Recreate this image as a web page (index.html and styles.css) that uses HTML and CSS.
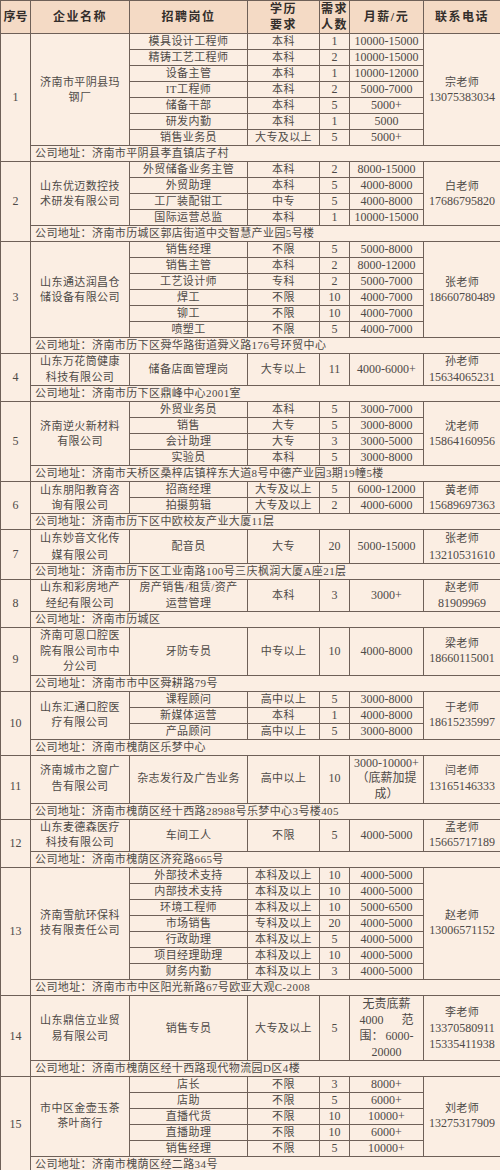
FILE: index.html
```html
<!DOCTYPE html>
<html lang="zh-CN">
<head>
<meta charset="utf-8">
<title>招聘信息</title>
<link rel="stylesheet" href="styles.css">
</head>
<body>
<table class="jobs">
<colgroup>
<col class="c-no"><col class="c-co"><col class="c-pos"><col class="c-edu"><col class="c-num"><col class="c-pay"><col class="c-tel">
</colgroup>
<thead>
<tr><th class="h-no">序号</th><th>企业名称</th><th>招聘岗位</th><th>学历<br>要求</th><th>需求<br>人数</th><th>月薪/元</th><th>联系电话</th></tr>
</thead>
<tbody>
<tr><td rowspan="8" class="n">1</td><td rowspan="7">济南市平阴县玛<br>钢厂</td><td>模具设计工程师</td><td>本科</td><td class="n">1</td><td class="n">10000-15000</td><td rowspan="7">宗老师<br><span class="n">13075383034</span></td></tr>
<tr><td>精铸工艺工程师</td><td>本科</td><td class="n">2</td><td class="n">10000-15000</td></tr>
<tr><td>设备主管</td><td>本科</td><td class="n">1</td><td class="n">10000-12000</td></tr>
<tr><td>IT工程师</td><td>本科</td><td class="n">2</td><td class="n">5000-7000</td></tr>
<tr><td>储备干部</td><td>本科</td><td class="n">5</td><td class="n">5000+</td></tr>
<tr><td>研发内勤</td><td>本科</td><td class="n">1</td><td class="n">5000</td></tr>
<tr><td>销售业务员</td><td>大专及以上</td><td class="n">5</td><td class="n">5000+</td></tr>
<tr><td colspan="6" class="addr">公司地址：济南市平阴县孝直镇店子村</td></tr>

<tr><td rowspan="5" class="n">2</td><td rowspan="4">山东优迈数控技<br>术研发有限公司</td><td>外贸储备业务主管</td><td>本科</td><td class="n">2</td><td class="n">8000-15000</td><td rowspan="4">白老师<br><span class="n">17686795820</span></td></tr>
<tr><td>外贸助理</td><td>本科</td><td class="n">5</td><td class="n">4000-8000</td></tr>
<tr><td>工厂装配钳工</td><td>中专</td><td class="n">5</td><td class="n">4000-8000</td></tr>
<tr><td>国际运营总监</td><td>本科</td><td class="n">1</td><td class="n">10000-15000</td></tr>
<tr><td colspan="6" class="addr">公司地址：济南市历城区郭店街道中交智慧产业园5号楼</td></tr>

<tr><td rowspan="7" class="n">3</td><td rowspan="6">山东通达润昌仓<br>储设备有限公司</td><td>销售经理</td><td>不限</td><td class="n">5</td><td class="n">5000-8000</td><td rowspan="6">张老师<br><span class="n">18660780489</span></td></tr>
<tr><td>销售主管</td><td>本科</td><td class="n">2</td><td class="n">8000-12000</td></tr>
<tr><td>工艺设计师</td><td>专科</td><td class="n">2</td><td class="n">5000-7000</td></tr>
<tr><td>焊工</td><td>不限</td><td class="n">10</td><td class="n">4000-7000</td></tr>
<tr><td>铆工</td><td>不限</td><td class="n">10</td><td class="n">4000-7000</td></tr>
<tr><td>喷塑工</td><td>不限</td><td class="n">5</td><td class="n">4000-7000</td></tr>
<tr><td colspan="6" class="addr">公司地址：济南市历下区舜华路街道舜义路176号环贸中心</td></tr>

<tr class="tall"><td rowspan="2" class="n">4</td><td>山东万花筒健康<br>科技有限公司</td><td>储备店面管理岗</td><td>大专以上</td><td class="n">11</td><td class="n">4000-6000+</td><td>孙老师<br><span class="n">15634065231</span></td></tr>
<tr><td colspan="6" class="addr">公司地址：济南市历下区鼎峰中心2001室</td></tr>

<tr><td rowspan="5" class="n">5</td><td rowspan="4">济南逆火新材料<br>有限公司</td><td>外贸业务员</td><td>本科</td><td class="n">5</td><td class="n">3000-7000</td><td rowspan="4">沈老师<br><span class="n">15864160956</span></td></tr>
<tr><td>销售</td><td>大专</td><td class="n">5</td><td class="n">3000-8000</td></tr>
<tr><td>会计助理</td><td>大专</td><td class="n">3</td><td class="n">3000-5000</td></tr>
<tr><td>实验员</td><td>本科</td><td class="n">5</td><td class="n">3000-8000</td></tr>
<tr><td colspan="6" class="addr">公司地址：济南市天桥区桑梓店镇梓东大道8号中德产业园3期19幢5楼</td></tr>

<tr><td rowspan="3" class="n">6</td><td rowspan="2">山东朋阳教育咨<br>询有限公司</td><td>招商经理</td><td>大专及以上</td><td class="n">5</td><td class="n">6000-12000</td><td rowspan="2">黄老师<br><span class="n">15689697363</span></td></tr>
<tr><td>拍摄剪辑</td><td>大专及以上</td><td class="n">2</td><td class="n">4000-6000</td></tr>
<tr><td colspan="6" class="addr">公司地址：济南市历下区中欧校友产业大厦11层</td></tr>

<tr class="tall t34"><td rowspan="2" class="n">7</td><td>山东妙音文化传<br>媒有限公司</td><td>配音员</td><td>大专</td><td class="n">20</td><td class="n">5000-15000</td><td>张老师<br><span class="n">13210531610</span></td></tr>
<tr><td colspan="6" class="addr">公司地址：济南市历下区工业南路100号三庆枫润大厦A座21层</td></tr>

<tr class="tall"><td rowspan="2" class="n">8</td><td>山东和彩房地产<br>经纪有限公司</td><td>房产销售/租赁/资产<br>运营管理</td><td>本科</td><td class="n">3</td><td class="n">3000+</td><td>赵老师<br><span class="n">81909969</span></td></tr>
<tr><td colspan="6" class="addr">公司地址：济南市历城区</td></tr>

<tr class="tall"><td rowspan="2" class="n">9</td><td>济南可恩口腔医<br>院有限公司市中<br>分公司</td><td>牙防专员</td><td>中专以上</td><td class="n">10</td><td class="n">4000-8000</td><td>梁老师<br><span class="n">18660115001</span></td></tr>
<tr><td colspan="6" class="addr">公司地址：济南市市中区舜耕路79号</td></tr>

<tr><td rowspan="4" class="n">10</td><td rowspan="3">山东汇通口腔医<br>疗有限公司</td><td>课程顾问</td><td>高中以上</td><td class="n">5</td><td class="n">3000-8000</td><td rowspan="3">于老师<br><span class="n">18615235997</span></td></tr>
<tr><td>新媒体运营</td><td>本科</td><td class="n">1</td><td class="n">4000-8000</td></tr>
<tr><td>产品顾问</td><td>高中以上</td><td class="n">5</td><td class="n">3000-8000</td></tr>
<tr><td colspan="6" class="addr">公司地址：济南市槐荫区乐梦中心</td></tr>

<tr class="tall t48"><td rowspan="2" class="n">11</td><td>济南城市之窗广<br>告有限公司</td><td>杂志发行及广告业务</td><td>高中以上</td><td class="n">10</td><td class="n">3000-10000+<br>（底薪加提<br>成）</td><td>闫老师<br><span class="n">13165146333</span></td></tr>
<tr><td colspan="6" class="addr">公司地址：济南市槐荫区经十西路28988号乐梦中心3号楼405</td></tr>

<tr class="tall"><td rowspan="2" class="n">12</td><td>山东麦德森医疗<br>科技有限公司</td><td>车间工人</td><td>不限</td><td class="n">5</td><td class="n">4000-5000</td><td>孟老师<br><span class="n">15665717189</span></td></tr>
<tr><td colspan="6" class="addr">公司地址：济南市槐荫区济兖路665号</td></tr>

<tr><td rowspan="8" class="n">13</td><td rowspan="7">济南雪航环保科<br>技有限责任公司</td><td>外部技术支持</td><td>本科及以上</td><td class="n">10</td><td class="n">4000-5000</td><td rowspan="7">赵老师<br><span class="n">13006571152</span></td></tr>
<tr><td>内部技术支持</td><td>本科及以上</td><td class="n">10</td><td class="n">4000-5000</td></tr>
<tr><td>环境工程师</td><td>本科及以上</td><td class="n">10</td><td class="n">5000-6500</td></tr>
<tr><td>市场销售</td><td>专科及以上</td><td class="n">20</td><td class="n">4000-5000</td></tr>
<tr><td>行政助理</td><td>本科及以上</td><td class="n">5</td><td class="n">4000-5000</td></tr>
<tr><td>项目经理助理</td><td>本科及以上</td><td class="n">10</td><td class="n">4000-5000</td></tr>
<tr><td>财务内勤</td><td>本科及以上</td><td class="n">3</td><td class="n">4000-5000</td></tr>
<tr><td colspan="6" class="addr">公司地址：济南市市中区阳光新路67号欧亚大观C-2008</td></tr>

<tr class="tall t65"><td rowspan="2" class="n">14</td><td>山东鼎信立业贸<br>易有限公司</td><td>销售专员</td><td>大专及以上</td><td class="n">5</td><td class="n"><div class="just"><span class="jl c">无责底薪</span><span class="jl"><span>4000</span><span>范</span></span><span class="jl"><span>围：</span><span>6000-</span></span><span class="jl c">20000</span></div></td><td>李老师<br><span class="n">13370580911</span><br><span class="n">15335411938</span></td></tr>
<tr><td colspan="6" class="addr">公司地址：济南市槐荫区经十西路现代物流园D区4楼</td></tr>

<tr><td rowspan="6" class="n">15</td><td rowspan="5">市中区金壶玉茶<br>茶叶商行</td><td>店长</td><td>不限</td><td class="n">3</td><td class="n">8000+</td><td rowspan="5">刘老师<br><span class="n">13275317909</span></td></tr>
<tr><td>店助</td><td>不限</td><td class="n">5</td><td class="n">6000+</td></tr>
<tr><td>直播代货</td><td>不限</td><td class="n">10</td><td class="n">10000+</td></tr>
<tr><td>直播助理</td><td>不限</td><td class="n">10</td><td class="n">6000+</td></tr>
<tr><td>销售经理</td><td>不限</td><td class="n">5</td><td class="n">10000+</td></tr>
<tr><td colspan="6" class="addr">公司地址：济南市槐荫区经二路34号</td></tr>
</tbody>
</table>
</body>
</html>
```
FILE: styles.css
```css
html, body {
  margin: 0;
  padding: 0;
  background: #fbeee3;
}

.jobs {
  width: 500px;
  table-layout: fixed;
  border-collapse: collapse;
  font-family: "Liberation Serif", "Noto Sans CJK SC", serif;
  font-size: 11px;
  letter-spacing: 0.4px;
  color: #4e4a47;
  background: #fbeee3;
}

.c-no { width: 30px; }
.c-co { width: 99px; }
.c-pos { width: 118px; }
.c-edu { width: 72px; }
.c-num { width: 30px; }
.c-pay { width: 74px; }
.c-tel { width: 77px; }

.jobs th,
.jobs td {
  border: 1px solid #6e6058;
  padding: 0;
  text-align: center;
  vertical-align: middle;
  line-height: 15px;
  white-space: nowrap;
}

.jobs th {
  background: #f4dac5;
  line-height: 16px;
  font-size: 12px;
  font-weight: bold;
  color: #332e2b;
  letter-spacing: 1.5px;
}

.jobs th.h-no {
  letter-spacing: 0;
}

.jobs td.addr {
  text-align: left;
  padding-left: 4px;
}

.jobs .n {
  font-size: 12px;
  letter-spacing: 0;
}

.jobs .tall td {
  line-height: 15.5px;
}

.jobs .t34 td { line-height: 16.5px; }
.jobs .t48 td { line-height: 15.8px; }
.jobs .t65 td { line-height: 16px; }

.just {
  width: 54px;
  margin: 0 auto;
  display: flex;
  flex-direction: column;
}

.jl {
  display: flex;
  justify-content: space-between;
}

.jl.c {
  justify-content: center;
}
```
